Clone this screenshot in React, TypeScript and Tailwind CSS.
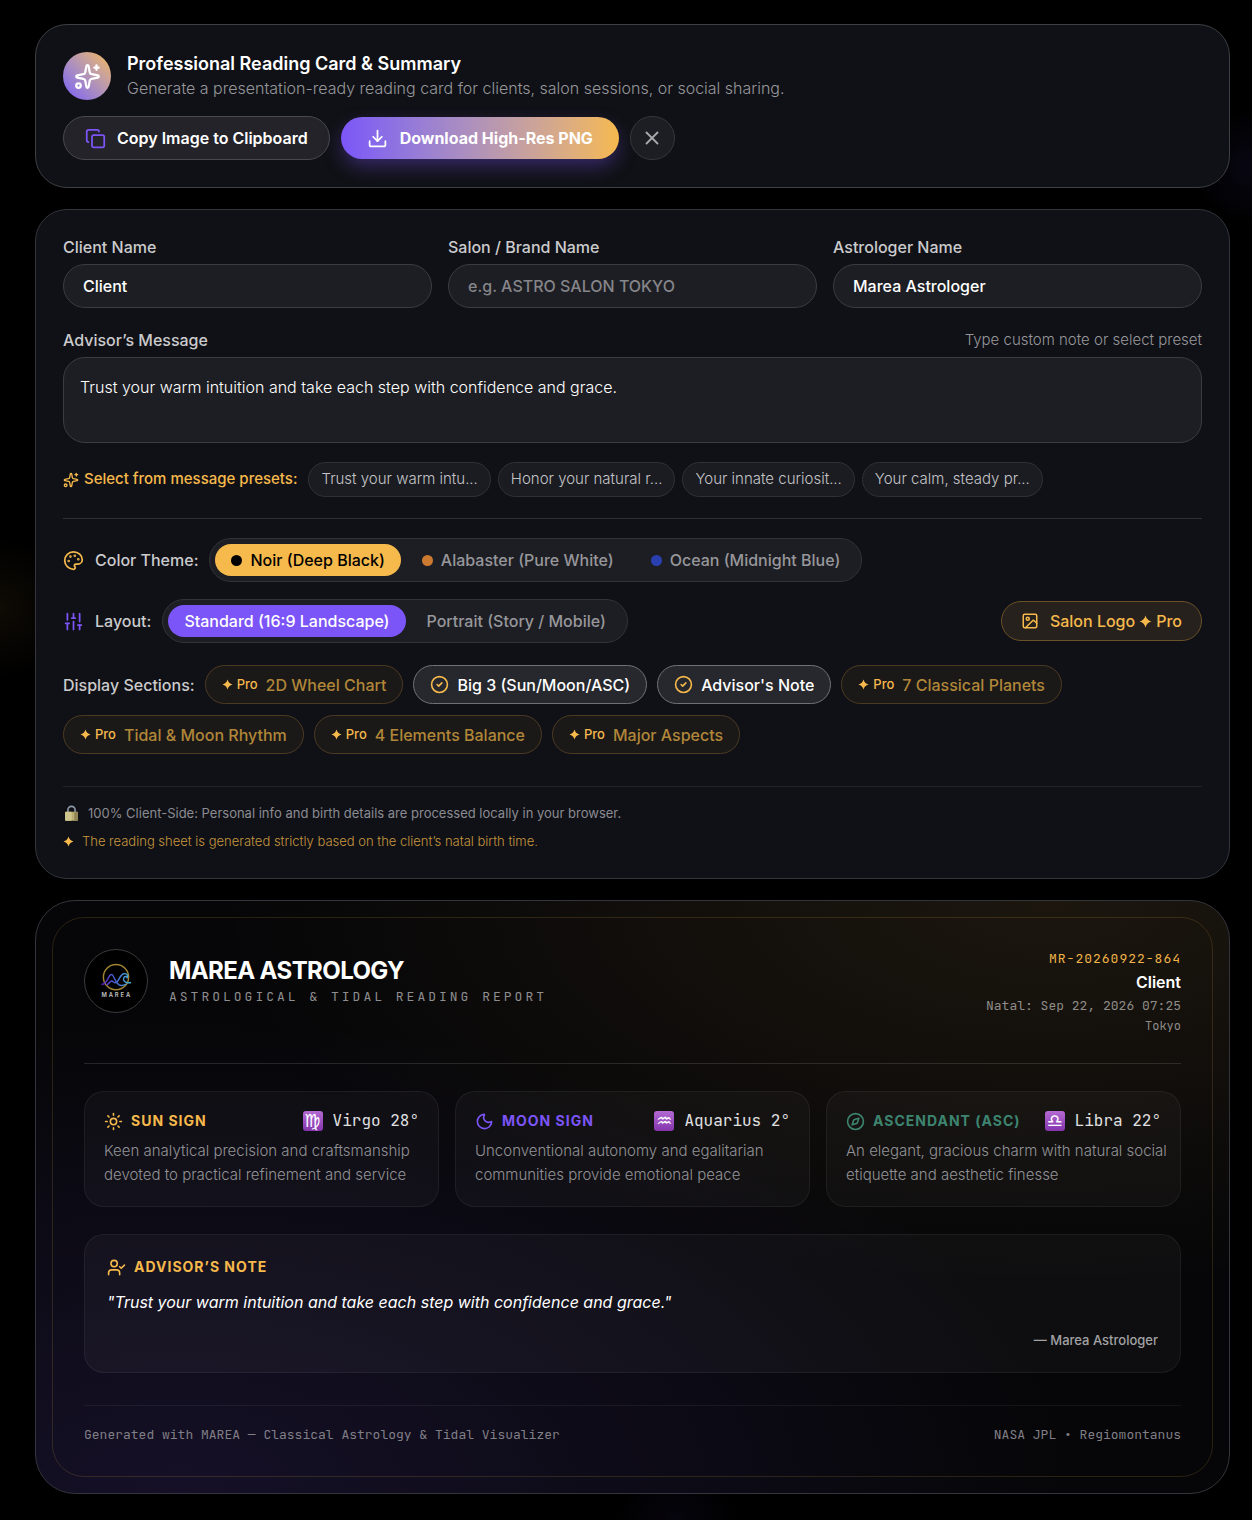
import React from "react";
import {
  CircleCheck,
  Compass,
  Copy,
  Download,
  Image as ImageIcon,
  Moon,
  Palette,
  SlidersVertical,
  Sparkles,
  Sun,
  UserCheck,
  X,
} from "lucide-react";

const MONO = "font-['JetBrains_Mono','DejaVu_Sans_Mono',monospace]";

const PRESETS = [
  { short: "Trust your warm intu...", full: "Trust your warm intuition and take each step with confidence and grace." },
  { short: "Honor your natural r...", full: "Honor your natural rhythm and let each season unfold in its own time." },
  { short: "Your innate curiosit...", full: "Your innate curiosity opens doors to new horizons." },
  { short: "Your calm, steady pr...", full: "Your calm, steady presence is a gift to those around you." },
];

const THEMES = [
  { id: "noir", label: "Noir (Deep Black)", dot: "bg-black" },
  { id: "alabaster", label: "Alabaster (Pure White)", dot: "bg-[#cc7a30]" },
  { id: "ocean", label: "Ocean (Midnight Blue)", dot: "bg-[#2a40b0]" },
];

const LAYOUTS = [
  { id: "standard", label: "Standard (16:9 Landscape)" },
  { id: "portrait", label: "Portrait (Story / Mobile)" },
];

const SECTIONS = [
  { label: "2D Wheel Chart", pro: true },
  { label: "Big 3 (Sun/Moon/ASC)", pro: false },
  { label: "Advisor's Note", pro: false },
  { label: "7 Classical Planets", pro: true },
  { label: "Tidal & Moon Rhythm", pro: true },
  { label: "4 Elements Balance", pro: true },
  { label: "Major Aspects", pro: true },
];

const SIGNS = [
  {
    title: "SUN SIGN",
    icon: Sun,
    color: "text-[#f6b94c]",
    glyph: "\u264D\uFE0E",
    value: "Virgo 28°",
    text: "Keen analytical precision and craftsmanship devoted to practical refinement and service",
  },
  {
    title: "MOON SIGN",
    icon: Moon,
    color: "text-[#7c55f8]",
    glyph: "\u2652\uFE0E",
    value: "Aquarius 2°",
    text: "Unconventional autonomy and egalitarian communities provide emotional peace",
  },
  {
    title: "ASCENDANT (ASC)",
    icon: Compass,
    color: "text-[#3d8570]",
    glyph: "\u264E\uFE0E",
    value: "Libra 22°",
    text: "An elegant, gracious charm with natural social etiquette and aesthetic finesse",
  },
];

const Star: React.FC<{ className?: string }> = ({ className }) => (
  <svg viewBox="0 0 12 12" fill="currentColor" aria-hidden="true" className={className}>
    <path d="M6 .5C6.7 3.4 8.6 5.3 11.5 6 8.6 6.7 6.7 8.6 6 11.5 5.3 8.6 3.4 6.7.5 6 3.4 5.3 5.3 3.4 6 .5Z" />
  </svg>
);

const Lock = () => (
  <svg viewBox="0 0 18 18" className="size-[17px]" aria-hidden="true">
    <path d="M5.2 9V5.200a3.800 3.800 0 0 1 7.600 0V9" fill="none" stroke="#8e9aa6" strokeWidth="1.7" />
    <rect x="2.2" y="7.2" width="13.6" height="9.4" rx="1" fill="#b9ad70" />
    <rect x="2.2" y="7.2" width="7" height="9.4" rx="1" fill="#cfc58d" />
    <rect x="12" y="7.2" width="3.8" height="9.4" rx="1" fill="#8f8454" />
  </svg>
);

const Logo = () => (
  <svg viewBox="0 0 64 64" className="size-full" role="img" aria-label="Marea">
    <defs>
      <linearGradient id="wave" gradientUnits="userSpaceOnUse" x1="17" x2="47" y1="0" y2="0">
        <stop offset="0" stopColor="#5a1ec8" />
        <stop offset=".45" stopColor="#4b5fd0" />
        <stop offset="1" stopColor="#45b4d2" />
      </linearGradient>
    </defs>
    <circle cx="32" cy="28" r="13" fill="none" stroke="#a08432" strokeWidth="1.5" />
    <path
      d="M17 35.500c4 .3 5-3 7-6.500 1.500-3 3-5 4.500-3s2.500 5.500 5 8.500 6 2.500 9 .8"
      fill="none"
      stroke="url(#wave)"
      strokeWidth="1.500"
    />
    <path
      d="M22 36c2.500 0 3.500-4 5.500-4s2.500 3 5 1.500S36 25.500 40 24.500c2.800-.6 5 1.500 3.500 4-.8-1.400-2.800-1.500-3.500.3-.9 2.500.8 4.500 4 5 1.300.2 2.500.1 3.500-.3"
      fill="none"
      stroke="url(#wave)"
      strokeWidth="1.500"
    />
    <text
      x="32.800"
      y="49"
      textAnchor="middle"
      fontSize="6"
      fontWeight="600"
      letterSpacing="2"
      fill="#c4c4c4"
      fontFamily="Inter, sans-serif"
    >
      MAREA
    </text>
  </svg>
);

const Field: React.FC<{
  id: string;
  label: string;
  value: string;
  placeholder?: string;
  onChange: (value: string) => void;
}> = ({ id, label, value, placeholder, onChange }) => (
  <div className="flex flex-col gap-[7px]">
    <label htmlFor={id} className="text-base leading-5 font-medium text-[#cbcbcd]">
      {label}
    </label>
    <input
      id={id}
      type="text"
      value={value}
      placeholder={placeholder}
      onChange={(e) => onChange(e.target.value)}
      className="h-11 w-full rounded-full border border-[#3b3c41] bg-[#1d1e23] px-[19px] text-base font-medium text-white outline-none placeholder:text-[#85858a]"
    />
  </div>
);

const Header = () => (
  <header className="flex flex-col gap-4 rounded-[32px] border border-[#3e3f43] bg-[#101116] p-[27px]">
    <div className="flex items-center gap-4">
      <div className="flex size-12 shrink-0 items-center justify-center rounded-full bg-linear-to-tr from-[#7c55f8] to-[#f6b94c] text-white">
        <Sparkles className="size-[27px]" />
      </div>
      <div>
        <h1 className="text-lg leading-6 font-semibold text-white">
          Professional Reading Card &amp; Summary
        </h1>
        <p className="text-base leading-6 font-light text-[#97979b]">
          Generate a presentation-ready reading card for clients, salon sessions, or social sharing.
        </p>
      </div>
    </div>
    <div className="flex flex-wrap items-center gap-[11px]">
      <button
        type="button"
        className="flex h-11 items-center gap-[11px] rounded-full border border-[#48484d] bg-[#242329] px-[21px] text-base font-semibold text-white"
      >
        <Copy className="size-[21px] text-[#7c55f8]" />
        Copy Image to Clipboard
      </button>
      <button
        type="button"
        className="flex h-[42px] items-center gap-3 rounded-full bg-linear-to-r from-[#7c55f8] to-[#f6b94c] px-[26px] text-base font-bold text-white shadow-[0_8px_20px_-2px_rgba(124,85,248,0.4)]"
      >
        <Download className="size-[21px]" />
        Download High-Res PNG
      </button>
      <button
        type="button"
        aria-label="Close"
        className="flex h-11 w-[45px] items-center justify-center rounded-full border border-[#36373b] bg-[#1d1e23] text-[#a9a9ac]"
      >
        <X className="size-[22px]" />
      </button>
    </div>
  </header>
);

const SignCard: React.FC<(typeof SIGNS)[number]> = ({ title, icon: Icon, color, glyph, value, text }) => (
  <article className="rounded-[20px] border border-white/[0.06] bg-white/[0.03] p-[19px]">
    <div className="flex h-5 items-center justify-between whitespace-nowrap">
      <h3 className={["flex items-center gap-2 text-sm font-bold tracking-[1px]", color].join(" ")}>
        <Icon className="size-[19px]" />
        {title}
      </h3>
      <span className={["flex items-center gap-2.5 text-base text-[#e0e0e2]", MONO].join(" ")}>
        <span className="flex size-5 items-center justify-center rounded-[3px] bg-linear-to-b from-[#b36ad2] to-[#8534ae] font-['DejaVu_Sans',sans-serif] text-lg leading-none font-bold text-white">
          {glyph}
        </span>
        {value}
      </span>
    </div>
    <p className="mt-2 -mr-2 text-[15px] leading-6 font-light text-[#929296]">{text}</p>
  </article>
);

const ReadingCard: React.FC<{
  client: string;
  brand: string;
  astrologer: string;
  message: string;
}> = ({ client, brand, astrologer, message }) => (
  <section className="rounded-[40px] border border-[#34343c] bg-[#060608] bg-[radial-gradient(ellipse_70%_65%_at_85%_0%,rgba(246,185,76,0.09),transparent),radial-gradient(ellipse_75%_80%_at_12%_100%,rgba(124,85,248,0.13),transparent)] p-4">
    <div className="rounded-[32px] border border-[#f6b94c]/15 p-[31px]">
      <header className="flex items-start justify-between border-b border-white/12 pb-[27px]">
        <div className="flex items-center gap-[21px]">
          <div className="size-16 shrink-0 overflow-hidden rounded-full border border-[#3a3a3c] bg-black">
            <Logo />
          </div>
          <div>
            <h2 className="text-2xl leading-8 font-bold tracking-tight text-white">
              {brand || "MAREA ASTROLOGY"}
            </h2>
            <p className={["text-[13px] leading-5 tracking-[3px] text-[#8e8e90]", MONO].join(" ")}>
              ASTROLOGICAL &amp; TIDAL READING REPORT
            </p>
          </div>
        </div>
        <div className={["flex flex-col gap-0.5 text-right", MONO].join(" ")}>
          <span className="text-[13px] leading-[19px] tracking-[1px] text-[#f0b448]">MR-20260922-864</span>
          <strong className="font-['Inter',sans-serif] text-base leading-6 font-semibold text-white">{client}</strong>
          <span className="text-[13px] leading-[19px] text-[#8e8c88]">Natal: Sep 22, 2026 07:25</span>
          <span className="text-xs leading-[19px] text-[#8e8c88]">Tokyo</span>
        </div>
      </header>

      <div className="mt-[27px] grid grid-cols-3 gap-4">
        {SIGNS.map((sign) => <SignCard key={sign.title} {...sign} />)}
      </div>

      <article className="mt-[27px] rounded-[20px] border border-white/[0.06] bg-white/[0.035] p-[22px]">
        <h3 className="flex items-center gap-2 text-sm leading-5 font-bold tracking-[1px] text-[#f6b94c]">
          <UserCheck className="size-[19px]" />
          ADVISOR’S NOTE
        </h3>
        <p className="mt-[11px] text-base leading-7 text-white italic">"{message}"</p>
        <p className="mt-3.5 text-right text-[13px] leading-5 font-medium text-[#a2a2a5]">— {astrologer}</p>
      </article>

      <footer
        className={["mt-8 flex justify-between border-t border-white/[0.06] pt-[19px] text-[13px] leading-5 text-[#807f86]", MONO].join(" ")}
      >
        <span>Generated with MAREA — Classical Astrology &amp; Tidal Visualizer</span>
        <span>NASA JPL • Regiomontanus</span>
      </footer>
    </div>
  </section>
);

export default function App() {
  const [client, setClient] = React.useState("Client");
  const [brand, setBrand] = React.useState("");
  const [astrologer, setAstrologer] = React.useState("Marea Astrologer");
  const [message, setMessage] = React.useState(PRESETS[0].full);
  const [theme, setTheme] = React.useState("noir");
  const [layout, setLayout] = React.useState("standard");

  return (
    <main className="flex min-h-screen flex-col gap-[21px] bg-black bg-[radial-gradient(circle_at_0%_40%,rgba(246,185,76,0.06),transparent_70px),radial-gradient(circle_at_100%_11%,rgba(124,85,248,0.07),transparent_60px),radial-gradient(circle_at_54%_100%,rgba(124,85,248,0.05),transparent_60px)] pt-6 pr-[22px] pb-[26px] pl-[35px] font-['Inter',sans-serif]">
      <Header />

      <section className="rounded-[32px] border border-[#34353b] bg-[#101116] p-[27px]">
        <div className="grid grid-cols-3 gap-4">
          <Field id="client" label="Client Name" value={client} onChange={setClient} />
          <Field
            id="brand"
            label="Salon / Brand Name"
            value={brand}
            placeholder="e.g. ASTRO SALON TOKYO"
            onChange={setBrand}
          />
          <Field id="astrologer" label="Astrologer Name" value={astrologer} onChange={setAstrologer} />
        </div>

        <div className="mt-[22px] flex items-center justify-between leading-5">
          <label htmlFor="message" className="text-base leading-5 font-medium text-[#cbcbcd]">
            Advisor’s Message
          </label>
          <span className="text-[15px] font-light text-[#97979b]">Type custom note or select preset</span>
        </div>
        <textarea
          id="message"
          rows={2}
          value={message}
          onChange={(e) => setMessage(e.target.value)}
          className="mt-[7px] block w-full resize-none rounded-[22px] border border-[#3b3c41] bg-[#1d1e23] p-4 text-base leading-[26px] font-light text-white outline-none"
        />

        <div className="mt-[19px] flex flex-wrap items-center gap-[7px]">
          <span className="mr-1 flex items-center gap-[5px] text-[15px] font-medium text-[#f6b94c]">
            <Sparkles className="size-4" />
            Select from message presets:
          </span>
          {PRESETS.map((preset) => (
            <button
              key={preset.short}
              type="button"
              onClick={() => setMessage(preset.full)}
              className="h-[35px] rounded-full border border-[#303136] bg-[#1b1c21] px-3 text-[15px] font-light text-[#c5c5c8]"
            >
              {preset.short}
            </button>
          ))}
        </div>

        <div className="mt-[21px] flex items-center gap-[11px] border-t border-[#2f3035] pt-[19px]">
          <Palette className="size-[21px] text-[#f6b94c]" />
          <span className="text-base font-medium text-[#cbcbcd]">Color Theme:</span>
          <div className="flex gap-[5px] rounded-full border border-[#323338] bg-[#1d1e23] p-[5px]">
            {THEMES.map((item) => (
              <button
                key={item.id}
                type="button"
                onClick={() => setTheme(item.id)}
                className={[
                  "flex h-8 items-center gap-2 rounded-full px-4 text-base font-medium",
                  theme === item.id ? "bg-[#f6b94c] text-black" : "text-[#97979b]",
                ].join(" ")}
              >
                <span className={["size-[11px] rounded-full", item.dot].join(" ")} />
                {item.label}
              </button>
            ))}
          </div>
        </div>

        <div className="mt-[17px] flex items-center gap-[11px]">
          <SlidersVertical className="size-[21px] text-[#7c55f8]" />
          <span className="text-base font-medium text-[#cbcbcd]">Layout:</span>
          <div className="flex gap-[5px] rounded-full border border-[#323338] bg-[#1d1e23] p-[5px]">
            {LAYOUTS.map((item) => (
              <button
                key={item.id}
                type="button"
                onClick={() => setLayout(item.id)}
                className={[
                  "h-8 rounded-full px-4 text-base font-medium",
                  layout === item.id ? "bg-[#7c55f8] text-white" : "text-[#97979b]",
                ].join(" ")}
              >
                {item.label}
              </button>
            ))}
          </div>
          <button
            type="button"
            className="ml-auto flex h-10 items-center gap-[11px] rounded-full border border-[#6b5127] bg-[#27211e] px-[19px] text-base font-medium text-[#f6b94c]"
          >
            <ImageIcon className="size-[18px]" />
            <span className="flex items-center gap-1">
              Salon Logo
              <Star className="size-[13px]" />
              Pro
            </span>
          </button>
        </div>

        <div className="mt-[22px] flex flex-wrap items-center gap-x-2.5 gap-y-[11px]">
          <span className="text-base font-medium text-[#cbcbcd]">Display Sections:</span>
          {SECTIONS.map((section) =>
            section.pro ? (
              <button
                key={section.label}
                type="button"
                className="flex h-[39px] items-center gap-2 rounded-full border border-[#4c3b22] bg-[#1b1818] px-4 text-base font-medium text-[#b08739]"
              >
                <span className="flex items-center gap-1 text-[13px] text-[#f6b94c]">
                  <Star className="size-[11px]" />
                  Pro
                </span>
                {section.label}
              </button>
            ) : (
              <button
                key={section.label}
                type="button"
                aria-pressed="true"
                className="flex h-[39px] items-center gap-2 rounded-full border border-[#707175] bg-[#27282d] px-4 text-base font-medium text-white"
              >
                <CircleCheck className="size-[19px] text-[#f6b94c]" />
                {section.label}
              </button>
            )
          )}
        </div>

        <div className="mt-8 flex flex-col gap-2 border-t border-[#222328] pt-4 text-[13px] leading-5">
          <p className="flex items-center gap-2 text-[#8b8b92]">
            <Lock />
            100% Client-Side: Personal info and birth details are processed locally in your browser.
          </p>
          <p className="flex items-center gap-2 font-light text-[#c6963f]">
            <Star className="size-[11px] text-[#f6b94c]" />
            The reading sheet is generated strictly based on the client’s natal birth time.
          </p>
        </div>
      </section>

      <ReadingCard client={client} brand={brand} astrologer={astrologer} message={message} />
    </main>
  );
}
